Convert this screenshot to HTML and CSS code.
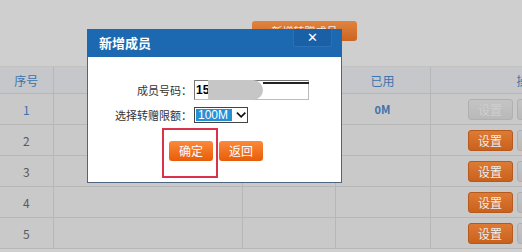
FILE: index.html
```html
<!DOCTYPE html>
<html>
<head>
  <meta charset="UTF-8">
  <title>成员管理</title>
  <link rel="stylesheet" href="styles.css">
</head>
<body>
  <div class="toolbar">
    <button class="btn btn-top">新增转赠成员</button>
  </div>

  <table class="member-table">
    <colgroup>
      <col class="c-no">
      <col class="c-num">
      <col class="c-quota">
      <col class="c-used">
      <col class="c-op">
    </colgroup>
    <thead>
      <tr>
        <th>序号</th>
        <th>成员号码</th>
        <th>限额</th>
        <th>已用</th>
        <th class="op-head">操作</th>
      </tr>
    </thead>
    <tbody>
      <tr class="first">
        <td>1</td><td></td><td></td><td class="used">0M</td>
        <td class="op"><button class="btn btn-row btn-off">设置</button><button class="btn btn-row btn-off">删除</button></td>
      </tr>
      <tr>
        <td>2</td><td></td><td></td><td></td>
        <td class="op"><button class="btn btn-row">设置</button><button class="btn btn-row btn-off">删除</button></td>
      </tr>
      <tr>
        <td>3</td><td></td><td></td><td></td>
        <td class="op"><button class="btn btn-row">设置</button><button class="btn btn-row btn-off">删除</button></td>
      </tr>
      <tr>
        <td>4</td><td></td><td></td><td></td>
        <td class="op"><button class="btn btn-row">设置</button><button class="btn btn-row btn-off">删除</button></td>
      </tr>
      <tr>
        <td>5</td><td></td><td></td><td></td>
        <td class="op"><button class="btn btn-row">设置</button><button class="btn btn-row btn-off">删除</button></td>
      </tr>
    </tbody>
  </table>

  <div class="dialog">
    <div class="dialog-title">
      <span>新增成员</span>
      <button class="dialog-close">✕</button>
    </div>
    <div class="dialog-body">
      <div class="form-grid">
        <label for="memberNo">成员号码：</label>
        <div class="phone-field">
          <input type="text" id="memberNo" value="15">
          <span class="mask"></span>
        </div>
        <label for="quota">选择转赠限额：</label>
        <div class="fake-select" id="quota">
          <span class="sel-value">100M</span>
          <svg class="sel-arrow" width="11" height="8" viewBox="0 0 11 8"><path d="M1 1.5 L5.5 6 L10 1.5" fill="none" stroke="#111" stroke-width="1.8"/></svg>
        </div>
      </div>
      <div class="dialog-actions">
        <button class="btn btn-dlg">确定</button>
        <button class="btn btn-dlg">返回</button>
      </div>
    </div>
    <div class="highlight"></div>
  </div>
</body>
</html>
```

FILE: styles.css
```css
body {
  margin: 0;
  width: 522px;
  height: 252px;
  overflow: hidden;
  background-color: #cfcfcf;
  font-family: "Noto Sans CJK SC", "Liberation Sans", sans-serif;
  font-size: 12px;
  position: relative;
}
.toolbar {
  height: 67px;
  box-sizing: border-box;
  padding: 21px 0 0 252px;
  border-bottom: 1px solid #c2c2c2;
}
.btn {
  border: none;
  color: #fff;
  font-family: inherit;
  cursor: pointer;
  padding: 0;
}
.btn-top {
  width: 105px;
  height: 20px;
  border-radius: 3px;
  background: linear-gradient(#e0843f, #cc6420);
  font-size: 11px;
  line-height: 20px;
  color: #eee;
  white-space: nowrap;
  overflow: hidden;
}

/* 成员表格 */
.member-table {
  border-collapse: collapse;
  table-layout: fixed;
  width: 720px;
}
.c-no { width: 53px; }
.c-num { width: 189px; }
.c-quota { width: 93px; }
.c-used { width: 95px; }
.c-op { width: 290px; }
.member-table th,
.member-table td {
  border: 1px solid #b7b7b7;
  border-top: none;
  text-align: center;
  padding: 0;
}
.member-table th:first-child,
.member-table td:first-child {
  border-left: none;
}
.member-table th {
  height: 26px;
  background-color: #c5c7ca;
  color: #3c74ad;
  font-weight: normal;
  font-size: 12px;
}
.member-table th.op-head {
  text-align: left;
  padding-left: 86px;
}
.member-table td {
  height: 30px;
  background-color: #c9c9c9;
  color: #5a5a5a;
  font-size: 12px;
}
.member-table tr.first td {
  color: #3e72aa;
}
.member-table td.used {
  font-weight: bold;
  font-size: 11px;
}
.member-table td.op {
  text-align: left;
  padding-left: 37px;
  white-space: nowrap;
}
.btn-row {
  width: 45px;
  height: 21px;
  margin-right: 4px;
  border-radius: 3px;
  background: linear-gradient(#dd7b35, #c9611d);
  border: 1px solid #b6591c;
  font-size: 12px;
  color: #eee;
  vertical-align: middle;
}
.btn-off {
  background: linear-gradient(#c4c4c4, #b9b9b9);
  border-color: #b0b0b0;
  color: #cfcfcf;
}

/* 弹出层 */
.dialog {
  position: absolute;
  left: 87px;
  top: 29px;
  width: 255px;
  height: 154px;
  box-sizing: border-box;
  background-color: #fff;
  border: 1px solid #4d6580;
  border-top: none;
}
.dialog-title {
  height: 28px;
  margin: 0 -1px;
  background-color: #1c69b2;
  color: #fff;
  display: flex;
  align-items: flex-start;
  justify-content: space-between;
}
.dialog-title span {
  font-weight: bold;
  font-size: 13px;
  line-height: 28px;
  padding-left: 12px;
}
.dialog-close {
  width: 39px;
  height: 18px;
  margin-right: 10px;
  background-color: #1a60a6;
  border: 1px solid #2a72b8;
  border-top: none;
  border-radius: 0 0 3px 3px;
  color: #fff;
  font-size: 13px;
  line-height: 16px;
  padding: 0;
}
.dialog-body {
  padding-top: 23px;
}
.form-grid {
  display: grid;
  grid-template-columns: 104px auto;
  column-gap: 2px;
  row-gap: 7px;
  align-items: center;
}
.form-grid label {
  text-align: right;
  color: #333;
  font-size: 11px;
}
.phone-field {
  position: relative;
  width: 115px;
  height: 20px;
}
.phone-field input {
  width: 115px;
  height: 20px;
  box-sizing: border-box;
  border: 1px solid #bbb;
  border-left-color: #777;
  border-top-color: #777;
  padding: 0 1px;
  font-size: 12px;
  font-weight: bold;
  font-family: "Liberation Sans", sans-serif;
  color: #000;
}
.mask {
  position: absolute;
  left: 14px;
  top: 0;
  width: 55px;
  height: 20px;
  background-color: #c6c6c6;
  border-radius: 0 10px 10px 0;
}
.phone-field::after {
  content: "";
  position: absolute;
  left: 69px;
  top: 2px;
  width: 46px;
  height: 2px;
  background-color: #222;
}
.fake-select {
  width: 54px;
  height: 16px;
  box-sizing: border-box;
  border: 1px solid #444;
  display: flex;
  align-items: center;
  padding: 1px;
}
.sel-value {
  background-color: #2590d6;
  color: #fff;
  font-family: "Liberation Sans", sans-serif;
  font-size: 12px;
  line-height: 12px;
  height: 12px;
  width: 36px;
  padding-left: 2px;
}
.sel-arrow {
  margin-left: 4px;
}
.dialog-actions {
  display: flex;
  gap: 6px;
  padding: 18px 0 0 81px;
}
.btn-dlg {
  width: 44px;
  height: 20px;
  border-radius: 3px;
  background: linear-gradient(#fb8a3a, #e85c08);
  font-size: 12px;
  line-height: 20px;
}
.highlight {
  position: absolute;
  left: 74px;
  top: 99px;
  width: 56px;
  height: 50px;
  border: 2px solid #d8324c;
  box-sizing: border-box;
}
```
